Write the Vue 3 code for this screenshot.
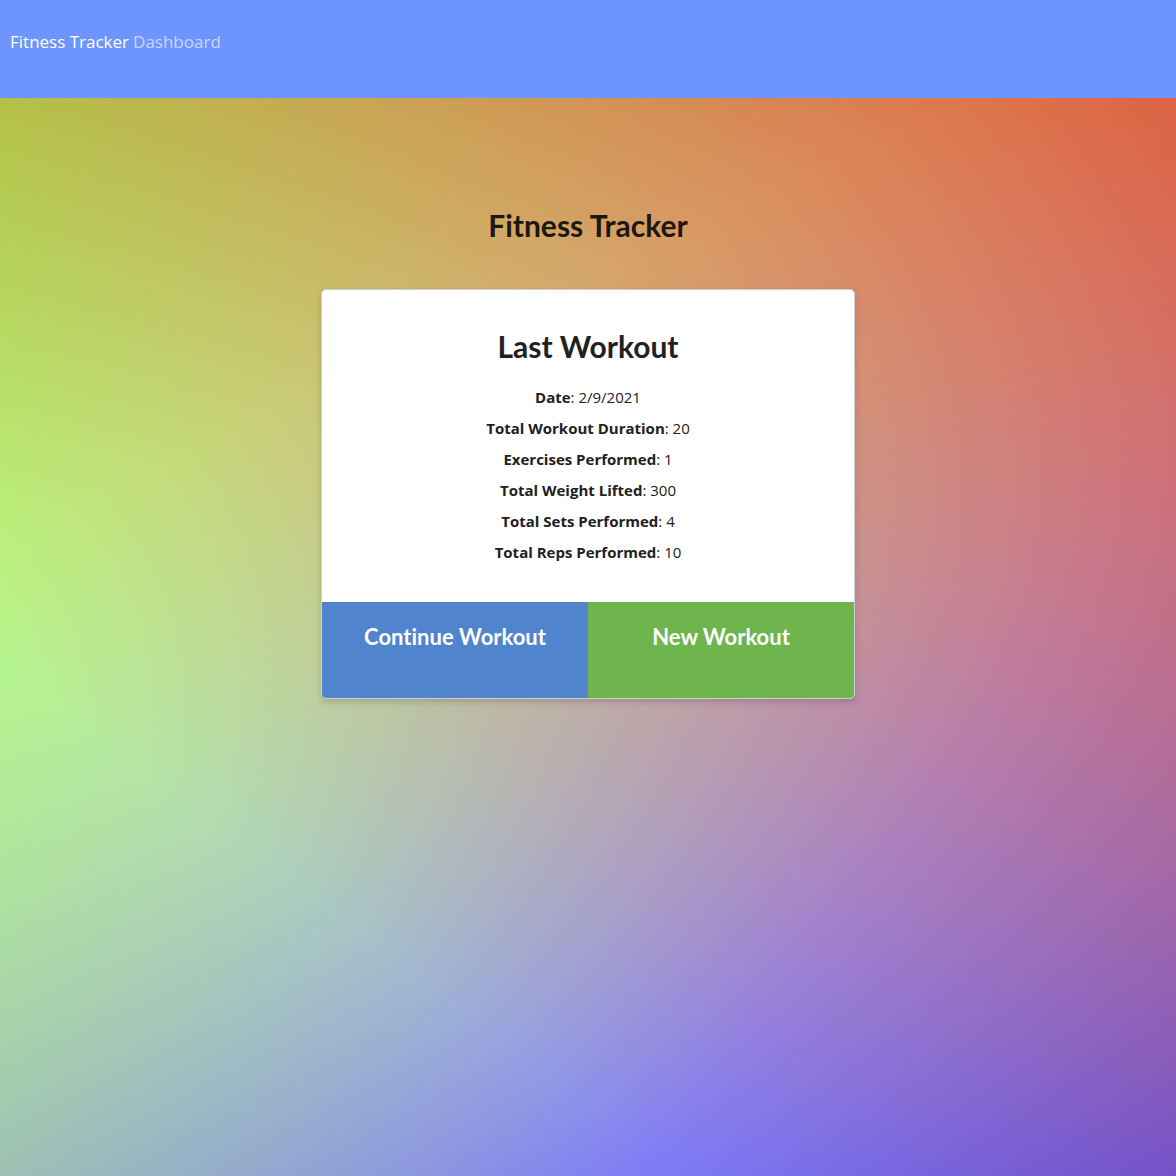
<script setup>
const stats = [
  { label: 'Date', value: '2/9/2021' },
  { label: 'Total Workout Duration', value: '20' },
  { label: 'Exercises Performed', value: '1' },
  { label: 'Total Weight Lifted', value: '300' },
  { label: 'Total Sets Performed', value: '4' },
  { label: 'Total Reps Performed', value: '10' },
]
</script>

<template>
  <div class="page">
    <nav class="nav">
      <a class="brand" href="#">Fitness Tracker</a>
      <a class="link" href="#">Dashboard</a>
    </nav>
    <main class="main">
      <h1 class="title">Fitness Tracker</h1>
      <section class="card">
        <div class="content">
          <h2 class="title">Last Workout</h2>
          <ul class="stats">
            <li v-for="s in stats" :key="s.label"><strong>{{ s.label }}</strong>: {{ s.value }}</li>
          </ul>
        </div>
        <div class="actions">
          <button class="continue" type="button">Continue Workout</button>
          <button class="new" type="button">New Workout</button>
        </div>
      </section>
    </main>
  </div>
</template>

<style>
body {
  margin: 0;
}
</style>

<style scoped>
.page {
  min-height: 100vh;
  font-family: "Open Sans", "Noto Sans", sans-serif;
  color: #212121;
  background:
    linear-gradient(217deg, rgba(218, 50, 15, 0.8), rgba(218, 50, 15, 0) 70.71%),
    linear-gradient(127deg, rgba(135, 251, 45, 0.8), rgba(135, 251, 45, 0) 70.71%),
    linear-gradient(336deg, rgba(30, 25, 238, 0.8), rgba(30, 25, 238, 0) 70.71%),
    #fff;
  background-size: 100% calc(100vh + 130px);
}
.nav {
  box-sizing: border-box;
  height: 98px;
  padding: 28px 10px;
  display: flex;
  gap: 4px;
  font-size: 17px;
  line-height: 28px;
  background: #6e94ff;
}
.nav a {
  text-decoration: none;
  color: #fff;
}
.nav .link {
  color: #c9d7ff;
}
.main {
  display: flex;
  flex-direction: column;
  align-items: center;
  gap: 40px;
  padding: 103px 16px 40px;
}
.title {
  margin: 0;
  font-family: Lato, sans-serif;
  font-weight: 700;
  font-size: 30px;
  line-height: 48px;
  text-align: center;
}
h1.title {
  color: #1c170f;
}
.card {
  box-sizing: border-box;
  width: 100%;
  max-width: 534px;
  border: 1px solid #d0d0d0;
  border-radius: 5px;
  overflow: hidden;
  background: #fff;
  box-shadow: 0 3px 6px rgba(34, 36, 38, 0.2);
}
.content {
  padding: 32px 16px 34px;
}
.stats {
  list-style: none;
  margin: 12px 0 0;
  padding: 0;
  text-align: center;
  font-size: 15px;
  line-height: 31px;
}
.actions {
  display: flex;
}
.actions button {
  flex: 1;
  height: 96px;
  padding: 0 16px 26px;
  border: 0;
  color: #fff;
  font-family: Lato, sans-serif;
  font-weight: 700;
  font-size: 22px;
  line-height: 32px;
  font-variant-ligatures: none;
}
.continue {
  background: #5084cd;
}
.new {
  background: #6db54c;
}
</style>
